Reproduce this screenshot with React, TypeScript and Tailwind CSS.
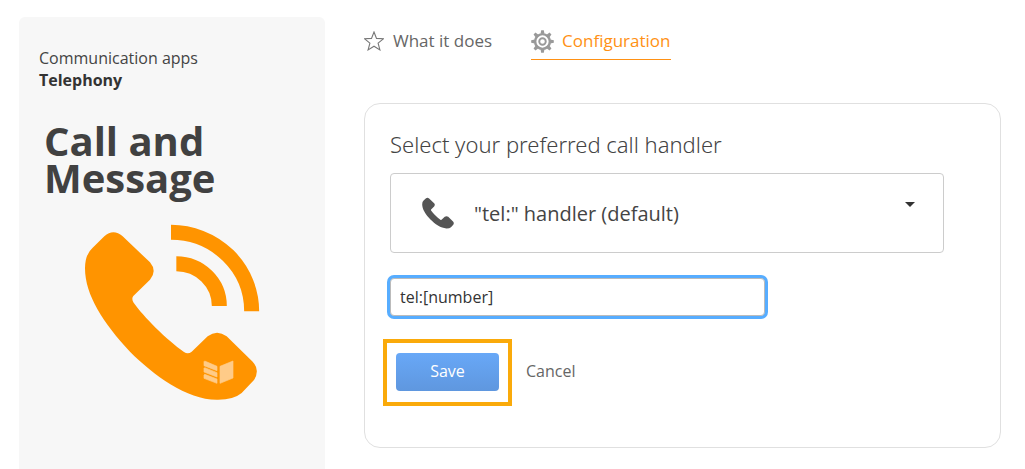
import { useState } from "react"

const PhoneShape = () => (
  <path d="M45 160 Q45 118 68 98 L103 64 Q130 40 158 64 L240 142 Q262 168 240 194 L190 243 Q184 250 190 262 C220 305 290 375 342 411 Q354 419 365 410 L413 364 Q441 342 470 364 L548 440 Q571 465 552 495 L515 534 Q490 555 440 554 C350 554 250 480 180 410 C100 325 45 240 45 160Z" />
)

const CallLogo = () => (
  <svg className="w-[176px] h-[177px]" viewBox="42 27 528 531" fill="#ff9400" aria-hidden="true">
    <PhoneShape />
    <g fill="none" stroke="#ff9400" strokeWidth="45">
      <path d="M303 52 A242 237 0 0 1 545 289" />
      <path d="M319 146 A129 127 0 0 1 448 273" />
    </g>
    <g fill="#ffcb88" stroke="#ffcb88" strokeWidth="2" strokeLinejoin="round">
      <path d="M404 438 L441 454 V467 L402 452 V440Z" />
      <path d="M404 458 L441 473 V486 L402 471 V460Z" />
      <path d="M404 478 L441 492 V505 L402 490 V480Z" />
      <path d="M450 454 L489 438 V489 L450 505Z" />
    </g>
  </svg>
)

const PhoneIcon = () => (
  <svg className="w-8 h-8" viewBox="42 48 522 508" fill="#555" aria-hidden="true">
    <PhoneShape />
  </svg>
)

const StarIcon = () => (
  <svg className="w-5 h-5" viewBox="0 0 20 20" fill="none" stroke="#777" strokeWidth="1.1" aria-hidden="true">
    <path d="M10 1 L12.5 7.4 L19.3 7.8 L14.1 12.1 L15.9 18.9 L10 15.2 L4.1 18.9 L5.9 12.1 L0.7 7.8 L7.5 7.4Z" />
  </svg>
)

const TEETH = [0, 45, 90, 135, 180, 225, 270, 315]

const GearIcon = () => (
  <svg className="w-[23px] h-[23px]" viewBox="-12 -12 24 24" fill="none" stroke="#999" aria-hidden="true">
    <circle r="7.7" strokeWidth="2.6" />
    <circle r="3.4" strokeWidth="2" />
    {TEETH.map((angle) => (
      <path key={angle} d="M-2 -8 L-1.4 -11.8 H1.4 L2 -8Z" fill="#999" stroke="none" transform={`rotate(${angle})`} />
    ))}
  </svg>
)

export default function App() {
  const [handler, setHandler] = useState("tel")
  const [pattern, setPattern] = useState("tel:[number]")

  return (
    <div className="min-h-screen flex gap-[39px] pt-[17px] pl-[19px] pr-6 bg-white font-['Open_Sans',sans-serif] text-[#444]">
      {/* App summary */}
      <aside className="w-[306px] shrink-0 rounded-t-md bg-[#f7f7f7] px-5 pt-[30px]">
        <p className="text-base leading-[22px]">Communication apps</p>
        <p className="text-base leading-[22px] font-bold text-[#333]">Telephony</p>
        <h1 className="mt-[31px] pl-[5px] text-[40px] leading-[37px] font-bold text-[#414141]">
          Call and
          <br />
          Message
        </h1>
        <div className="mt-7 pl-[45px]">
          <CallLogo />
        </div>
      </aside>

      <main className="flex-1 min-w-0">
        <nav className="flex gap-[39px] text-[17px] leading-6 text-[#666]">
          <a href="#what" className="flex items-center gap-[9px] pt-3 pb-[6px] border-b border-transparent">
            <StarIcon />
            What it does
          </a>
          <a href="#config" className="flex items-center gap-2 pt-3 pb-[6px] border-b border-[#ff9114] text-[#ff9114]">
            <GearIcon />
            Configuration
          </a>
        </nav>

        <form
          className="mt-[43px] rounded-2xl border border-[#e0e0e0] pl-[25px] pr-14 pt-6 pb-[41px]"
          onSubmit={(e) => e.preventDefault()}
        >
          <label htmlFor="handler" className="block font-['Noto_Sans',sans-serif] text-[22px] leading-8 font-light">
            Select your preferred call handler
          </label>
          <div className="relative mt-[13px]">
            <select
              id="handler"
              value={handler}
              onChange={(e) => setHandler(e.target.value)}
              className="block w-full h-20 appearance-none rounded border border-[#ccc] bg-white pl-[83px] pr-12 pt-px text-xl"
            >
              <option value="tel">"tel:" handler (default)</option>
            </select>
            <span className="pointer-events-none absolute left-8 top-6">
              <PhoneIcon />
            </span>
            <svg className="pointer-events-none absolute right-7 top-[29px] w-3 h-[5px]" viewBox="0 0 12 5" fill="#333" aria-hidden="true">
              <path d="M1 0 H11 L6 5Z" />
            </svg>
          </div>

          <input
            type="text"
            aria-label="Number pattern"
            value={pattern}
            onChange={(e) => setPattern(e.target.value)}
            className="mt-[25px] block w-[375px] max-w-full h-[38px] rounded border border-[#bbb] bg-white px-[9px] text-base text-[#333] outline-none ring-[3px] ring-[#57adff]"
          />

          <div className="mt-[23px] -ml-[7px] flex items-center gap-[14px]">
            <div className="border-4 border-[#faaa0a] px-[9px] pt-[10px] pb-[11px]">
              <button
                type="submit"
                className="block w-[103px] h-[38px] pb-[3px] rounded bg-linear-to-b from-[#68a8f7] to-[#5f97df] text-base text-white"
              >
                Save
              </button>
            </div>
            <button type="button" className="pb-[3px] text-base text-[#666]">
              Cancel
            </button>
          </div>
        </form>
      </main>
    </div>
  )
}
